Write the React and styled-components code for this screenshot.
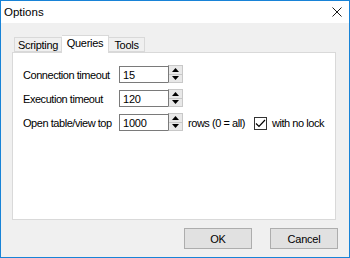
import React from "react";
import styled, { createGlobalStyle } from "styled-components";

const Global = createGlobalStyle`
  html, body { margin: 0; padding: 0; background: #ffffff; }
  body { font-family: "Liberation Sans", Arial, sans-serif; }
  * { box-sizing: border-box; }
`;

const Window = styled.div`
  width: 350px;
  height: 258px;
  border: 1px solid #1883d7;
  display: flex;
  flex-direction: column;
  background: #f0f0f0;
  font-size: 11px;
  letter-spacing: -0.45px;
  color: #000;
`;

const TitleBar = styled.div`
  height: 22px;
  background: #ffffff;
  display: flex;
  align-items: center;
  justify-content: space-between;
  padding: 0 7px 0 3px;
`;

const Title = styled.span`
  font-size: 11.5px;
  letter-spacing: 0;
`;

const Body = styled.div`
  flex: 1;
  display: flex;
  flex-direction: column;
  padding: 12px 13px 8px 11px;
`;

const TabStrip = styled.div`
  display: flex;
  align-items: flex-end;
  height: 17px;
  padding-left: 2px;
  position: relative;
  z-index: 1;
`;

const Tab = styled.div`
  height: ${(p) => (p.$active ? "18px" : "15px")};
  margin-bottom: ${(p) => (p.$active ? "-1px" : "0")};
  width: ${(p) => p.$w}px;
  background: ${(p) => (p.$active ? "#ffffff" : "#f0f0f0")};
  border: 1px solid #d9d9d9;
  border-bottom: ${(p) => (p.$active ? "none" : "1px solid #d9d9d9")};
  border-left: ${(p) => (p.$noLeft ? "none" : "1px solid #d9d9d9")};
  display: flex;
  align-items: center;
  justify-content: center;
  padding-bottom: ${(p) => (p.$active ? "3px" : "0")};
  letter-spacing: -0.3px;
`;

const Panel = styled.div`
  height: 168px;
  background: #ffffff;
  border: 1px solid #d9d9d9;
  padding: 13px 10px 0 10px;
  display: flex;
  flex-direction: column;
  gap: 6px;
`;

const Row = styled.div`
  display: flex;
  align-items: center;
  height: 18px;
`;

const Label = styled.span`
  width: 96px;
  white-space: nowrap;
`;

const Spin = styled.div`
  display: flex;
  height: 18px;
`;

const Input = styled.div`
  width: 49px;
  height: 17px;
  border: 1px solid #7a7a7a;
  border-right: none;
  padding-left: 3px;
  display: flex;
  align-items: center;
  background: #fff;
  letter-spacing: -0.2px;
`;

const Arrows = styled.div`
  width: 15px;
  height: 18px;
  display: flex;
  flex-direction: column;
  border: 1px solid #c8c8c8;
  border-left: 1px solid #7a7a7a;
  margin-top: -1px;
`;

const ArrowBtn = styled.div`
  flex: 1;
  background: #e8e8e8;
  display: flex;
  align-items: center;
  justify-content: center;
  border-top: ${(p) => (p.$bottom ? "1px solid #c8c8c8" : "none")};
`;

const Text = styled.span`
  margin-left: ${(p) => p.$ml || 0}px;
  white-space: nowrap;
`;

const Check = styled.div`
  width: 13px;
  height: 13px;
  border: 1px solid #333;
  background: #fff;
  margin-left: 9px;
  display: flex;
  align-items: center;
  justify-content: center;
`;

const Footer = styled.div`
  margin-top: 8px;
  display: flex;
  justify-content: flex-end;
  gap: 18px;
  margin-right: -2px;
`;

const Button = styled.button`
  width: 68px;
  height: 21px;
  background: #e1e1e1;
  border: 1px solid #adadad;
  font-family: "Liberation Sans", Arial, sans-serif;
  font-size: 11px;
  letter-spacing: -0.2px;
  color: #000;
  padding: 0;
`;

const Tri = ({ up }) => (
  <svg width="7" height="4" viewBox="0 0 7 4">
    <polygon points={up ? "3.5,0 7,4 0,4" : "0,0 7,0 3.5,4"} fill="#000" />
  </svg>
);

const Spinner = ({ value }) => (
  <Spin>
    <Input>{value}</Input>
    <Arrows>
      <ArrowBtn>
        <Tri up />
      </ArrowBtn>
      <ArrowBtn $bottom>
        <Tri />
      </ArrowBtn>
    </Arrows>
  </Spin>
);

export default function App() {
  return (
    <>
      <Global />
      <Window>
        <TitleBar>
          <Title>Options</Title>
          <svg width="10" height="10" viewBox="0 0 10 10">
            <path d="M0.5 0.5 L9.5 9.5 M9.5 0.5 L0.5 9.5" stroke="#000" strokeWidth="0.9" />
          </svg>
        </TitleBar>
        <Body>
          <TabStrip>
            <Tab $w={48}>Scripting</Tab>
            <Tab $w={47} $active $noLeft>Queries</Tab>
            <Tab $w={36} $noLeft>Tools</Tab>
          </TabStrip>
          <Panel>
            <Row>
              <Label>Connection timeout</Label>
              <Spinner value="15" />
            </Row>
            <Row>
              <Label>Execution timeout</Label>
              <Spinner value="120" />
            </Row>
            <Row>
              <Label>Open table/view top</Label>
              <Spinner value="1000" />
              <Text $ml={5}>rows (0 = all)</Text>
              <Check>
                <svg width="11" height="9" viewBox="0 0 11 9">
                  <path d="M1 4.5 L4 7.5 L10 1" stroke="#000" strokeWidth="1.2" fill="none" />
                </svg>
              </Check>
              <Text $ml={5}>with no lock</Text>
            </Row>
          </Panel>
          <Footer>
            <Button>OK</Button>
            <Button>Cancel</Button>
          </Footer>
        </Body>
      </Window>
    </>
  );
}
